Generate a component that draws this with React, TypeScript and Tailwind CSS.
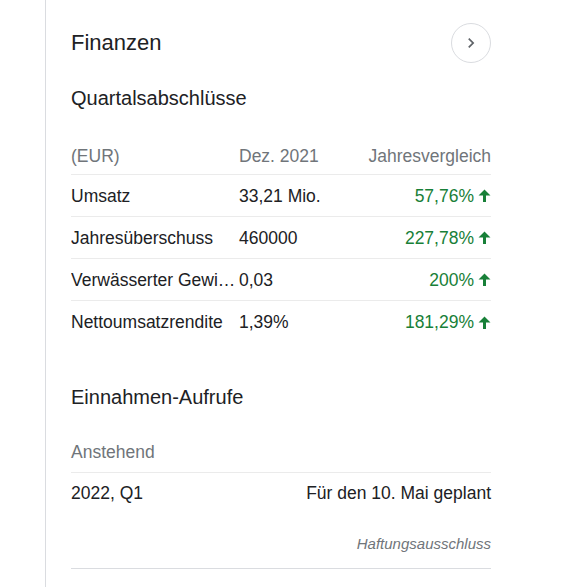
import { ReactNode } from 'react'

const rows = [
  { label: 'Umsatz', value: '33,21 Mio.', change: '57,76%' },
  { label: 'Jahresüberschuss', value: '460000', change: '227,78%' },
  { label: 'Verwässerter Gewinn je Aktie', value: '0,03', change: '200%' },
  { label: 'Nettoumsatzrendite', value: '1,39%', change: '181,29%' },
]

function UpArrow() {
  return (
    <svg width="13" height="13" viewBox="0 0 13 13" className="ml-[4px] shrink-0" aria-hidden="true">
      <path d="M6.5 0.5L12.5 6.5H8V13H5V6.5H0.5Z" fill="#188038" />
    </svg>
  )
}

function Row({ children, last }: { children: ReactNode; last?: boolean }) {
  return (
    <div className={`flex h-[42px] items-center ${last ? '' : 'border-b border-[#ebebeb]'}`}>{children}</div>
  )
}

export default function App() {
  return (
    <div className="min-h-screen bg-white font-['Liberation_Sans',Arial,sans-serif] text-[#202124]">
      <div className="ml-[45px] w-[446px] border-l border-[#dadce0] pl-[25px] pb-[18px]">
        {/* Header */}
        <div className="flex items-center justify-between pt-[23px]">
          <h2 className="text-[22px] leading-[28px] font-normal">Finanzen</h2>
          <button className="flex h-[40px] w-[40px] items-center justify-center rounded-full border border-[#dadce0] bg-white">
            <svg width="20" height="20" viewBox="0 0 24 24" aria-hidden="true">
              <path d="M10 6L8.59 7.41 13.17 12l-4.58 4.59L10 18l6-6z" fill="#5f6368" />
            </svg>
          </button>
        </div>

        <h3 className="mt-[22px] text-[20px] leading-[26px] font-normal">Quartalsabschlüsse</h3>

        {/* Table */}
        <div className="mt-[33px] text-[17.5px] leading-[24px]">
          <div className="flex border-b border-[#ebebeb] pb-[6px] text-[#70757a]">
            <div className="w-[168px]">(EUR)</div>
            <div className="flex-1">Dez. 2021</div>
            <div className="text-right">Jahresvergleich</div>
          </div>
          {rows.map((r, i) => (
            <Row key={r.label} last={i === rows.length - 1}>
              <div className="w-[168px] truncate pr-[1px]">{r.label}</div>
              <div className="flex-1">{r.value}</div>
              <div className="flex items-center text-[#188038]">
                {r.change}
                <UpArrow />
              </div>
            </Row>
          ))}
        </div>

        <h3 className="mt-[41px] text-[20px] leading-[26px] font-normal">Einnahmen-Aufrufe</h3>

        <div className="mt-[30px] text-[17.5px] leading-[24px]">
          <div className="border-b border-[#ebebeb] pb-[8px] text-[#70757a]">Anstehend</div>
          <div className="flex justify-between pt-[8px]">
            <span>2022, Q1</span>
            <span>Für den 10. Mai geplant</span>
          </div>
        </div>

        <div className="mt-[29px] border-b border-[#dadce0] pb-[14px] text-right text-[15px] leading-[20px] italic text-[#70757a]">
          Haftungsausschluss
        </div>
      </div>
    </div>
  )
}
